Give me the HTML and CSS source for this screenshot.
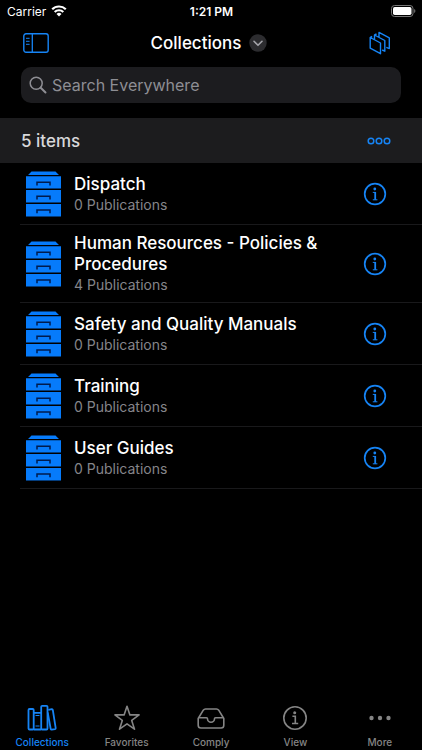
FILE: index.html
```html
<!DOCTYPE html>
<html lang="en">
<head>
<meta charset="utf-8">
<meta name="viewport" content="width=device-width, initial-scale=1">
<title>Collections</title>
<link rel="stylesheet" href="styles.css">
</head>
<body>
<svg class="defs" aria-hidden="true">
  <symbol id="cabinet" viewBox="0 0 35 46">
    <path fill="currentColor" d="M5.500 0.500h24l3.500 3.500H2zM0 5.200h35v12.300H0zM0 19h35v12.400H0zM0 33h35v12.500H0z"/>
    <path fill="none" stroke="#001b4d" stroke-width="1.500" d="M11 14.500v-3.200h13v3.200M11 28.500v-3.200h13v3.200M11 42.300v-3.200h13v3.200"/>
  </symbol>
  <symbol id="info" viewBox="0 0 24 24">
    <circle cx="12" cy="12" r="10.300" fill="none" stroke="currentColor" stroke-width="1.700"/>
    <circle cx="11.800" cy="7" r="1.400" fill="currentColor"/>
    <path fill="none" stroke="currentColor" stroke-width="1.800" d="M12.200 10v7.800"/>
    <path fill="none" stroke="currentColor" stroke-width="1" d="M9.800 10.400h3M9.800 17.800h4.600"/>
  </symbol>
</svg>
<div class="app">
  <div class="status">
    <div class="carrier"><span>Carrier</span>
      <svg width="16" height="12" viewBox="0 0 16 12"><path fill="none" stroke="#fff" stroke-width="2.200" d="M1.200 4.300a9.700 9.700 0 0 1 13.600 0M3.700 7a6.200 6.200 0 0 1 8.600 0"/><path fill="#fff" d="M8 11.400 5.500 8.900a3.600 3.600 0 0 1 5 0z"/></svg>
    </div>
    <div class="time">1:21 PM</div>
    <div class="battery">
      <svg width="25" height="12" viewBox="0 0 25 12"><rect x=".5" y=".5" width="21.500" height="11" rx="3" fill="none" stroke="#777"/><rect x="2" y="2" width="18.500" height="8" rx="1.700" fill="#fff"/><path fill="#777" d="M23.200 4v4c1.600-.6 1.600-3.400 0-4z"/></svg>
    </div>
  </div>
  <header class="nav">
    <button class="icon-button" aria-label="Toggle sidebar">
      <svg width="26" height="20" viewBox="0 0 26 20" fill="none" stroke="currentColor"><rect x=".8" y=".8" width="24.400" height="18.400" rx="2.200" stroke-width="1.400"/><path stroke-width="1.300" d="M9.300 1v18"/><path stroke-width="1" d="M3 5.300h3.600M3 8.300h3.600M3 11.300h3.600"/></svg>
    </button>
    <button class="title"><span>Collections</span>
      <svg width="18" height="18" viewBox="0 0 18 18"><circle cx="9" cy="9" r="8.700" fill="#2c2c2f"/><path d="m5 7.300 4 4 4-4" fill="none" stroke="#a4a4aa" stroke-width="1.600" stroke-linecap="round" stroke-linejoin="round"/></svg>
    </button>
    <button class="icon-button" aria-label="Publications">
      <svg width="22" height="24" viewBox="0 0 22 24" fill="none" stroke="currentColor" stroke-width="1.400" stroke-linejoin="round"><path d="M1.200 6.500 11.500 12v10.700L1.200 17.200zM1.200 6.500l2-1M5.500 8.200V4l10.300 5.500v10.700l-2.600-1.200M5.500 4l2-1M10 6V1.400l10.300 5.500v10.700l-3-1.200"/></svg>
    </button>
  </header>
  <div class="search">
    <svg width="18" height="18" viewBox="0 0 18 18" fill="none" stroke="#8e8e94" stroke-width="1.500" stroke-linecap="round"><circle cx="7.200" cy="7.200" r="6"/><path stroke-width="2" d="m11.700 11.700 4.800 4.800"/></svg>
    <input type="search" placeholder="Search Everywhere" aria-label="Search Everywhere">
  </div>
  <div class="summary">
    <h2>5 items</h2>
    <button class="icon-button" aria-label="Options">
      <svg width="24" height="8" viewBox="0 0 24 8" fill="none" stroke="currentColor" stroke-width="1.500"><circle cx="4" cy="4" r="2.800"/><circle cx="12" cy="4" r="2.800"/><circle cx="20" cy="4" r="2.800"/></svg>
    </button>
  </div>
  <ul class="list">
    <li class="row"><svg class="cabinet"><use href="#cabinet"/></svg><div class="body"><div class="text"><h3>Dispatch</h3><p>0 Publications</p></div><button class="icon-button" aria-label="About Dispatch"><svg class="info"><use href="#info"/></svg></button></div></li>
    <li class="row"><svg class="cabinet"><use href="#cabinet"/></svg><div class="body"><div class="text"><h3>Human Resources - Policies &amp; Procedures</h3><p>4 Publications</p></div><button class="icon-button" aria-label="About Human Resources"><svg class="info"><use href="#info"/></svg></button></div></li>
    <li class="row"><svg class="cabinet"><use href="#cabinet"/></svg><div class="body"><div class="text"><h3>Safety and Quality Manuals</h3><p>0 Publications</p></div><button class="icon-button" aria-label="About Safety and Quality Manuals"><svg class="info"><use href="#info"/></svg></button></div></li>
    <li class="row"><svg class="cabinet"><use href="#cabinet"/></svg><div class="body"><div class="text"><h3>Training</h3><p>0 Publications</p></div><button class="icon-button" aria-label="About Training"><svg class="info"><use href="#info"/></svg></button></div></li>
    <li class="row"><svg class="cabinet"><use href="#cabinet"/></svg><div class="body"><div class="text"><h3>User Guides</h3><p>0 Publications</p></div><button class="icon-button" aria-label="About User Guides"><svg class="info"><use href="#info"/></svg></button></div></li>
  </ul>
  <nav class="tabs">
    <a class="tab active" href="#collections">
      <svg width="30" height="28" viewBox="0 0 30 28" fill="none" stroke="currentColor" stroke-width="1.800" stroke-linejoin="round"><rect x="1.500" y="5" width="5.200" height="20.500" rx="1"/><path d="M6.700 8.800h7.500M6.700 25.500h7.500"/><path stroke-width="1.200" d="M8.500 11.500h4M8.500 22h4"/><rect x="14.200" y="1.800" width="6.300" height="23.700" rx="1"/><path d="m21.300 5.800 3.500-.7q.8-.1 1 .8l2.900 18.300q.1.800-.7 1l-3.300.5q-.8.100-1-.7L20.700 8.500"/></svg>
      <span>Collections</span></a>
    <a class="tab" href="#favorites">
      <svg width="28" height="28" viewBox="0 0 28 28" fill="none" stroke="currentColor" stroke-width="1.600" stroke-linejoin="round"><path d="m14 2.200 2.900 8.700h9.200l-7.400 5.500 2.800 8.800-7.500-5.400-7.500 5.400 2.800-8.800-7.400-5.500h9.200z"/></svg>
      <span>Favorites</span></a>
    <a class="tab" href="#comply">
      <svg width="28" height="28" viewBox="0 0 28 28" fill="none" stroke="currentColor" stroke-width="1.600" stroke-linejoin="round"><path d="M1.200 14.500v6.800q0 2.700 2.700 2.700h20.200q2.700 0 2.700-2.700v-6.800L21.700 6.200Q20.900 5 19.500 5h-11Q7.100 5 6.300 6.200zM1.200 13.700h8.300q1 0 1 1a3.500 3.500 0 0 0 7 0q0-1 1-1h8.300"/></svg>
      <span>Comply</span></a>
    <a class="tab" href="#view">
      <svg width="28" height="28" viewBox="0 0 28 28" fill="none" stroke="currentColor" stroke-width="1.600"><circle cx="14" cy="14" r="11.200"/><circle cx="13.700" cy="8.800" r="1.500" fill="currentColor" stroke="none"/><path d="M11.400 12.300h2.900v7.200M11 19.500h6.200"/></svg>
      <span>View</span></a>
    <a class="tab" href="#more">
      <svg width="28" height="28" viewBox="0 0 28 28" fill="currentColor"><circle cx="5.500" cy="14" r="2.200"/><circle cx="14" cy="14" r="2.200"/><circle cx="22.500" cy="14" r="2.200"/></svg>
      <span>More</span></a>
  </nav>
</div>
</body>
</html>
```
FILE: styles.css
```css
* { box-sizing: border-box; }
body {
  margin: 0;
  background: #000;
  color: #fff;
  font-family: Inter, "Liberation Sans", sans-serif;
}
h2, h3, p, ul { margin: 0; padding: 0; }
button {
  border: 0;
  padding: 0;
  background: none;
  color: inherit;
  font: inherit;
}
svg { display: block; flex: none; }
.defs { display: none; }
.app {
  display: flex;
  flex-direction: column;
  min-height: 100vh;
}
.status {
  display: grid;
  grid-template-columns: 1fr auto 1fr;
  align-items: center;
  height: 22px;
  padding: 0 6px 0 7px;
  font-size: 12px;
}
.carrier { display: flex; align-items: center; gap: 5px; }
.time { font-weight: 600; }
.battery { justify-self: end; }
.nav {
  display: flex;
  align-items: center;
  justify-content: space-between;
  height: 42px;
  padding: 0 31px 0 23px;
}
.icon-button { color: #1684f5; }
.title {
  display: flex;
  align-items: center;
  gap: 8px;
  font-size: 17px;
  font-weight: 500;
}
.search {
  display: flex;
  align-items: center;
  gap: 5px;
  height: 36px;
  margin: 3px 21px 15px;
  padding: 0 8px;
  border-radius: 10px;
  background: #1c1c1f;
}
.search input {
  flex: 1;
  min-width: 0;
  padding: 0;
  border: 0;
  outline: 0;
  background: none;
  color: #fff;
  font: 16px Inter, sans-serif;
}
.search input::placeholder { color: #8e8e94; opacity: 1; }
.summary {
  display: flex;
  align-items: center;
  justify-content: space-between;
  height: 45px;
  padding: 0 31px 0 21px;
  background: #1c1c1e;
}
.summary h2 { color: #d8d8da; font-size: 17px; font-weight: 500; }
.list { list-style: none; }
.row {
  display: flex;
  padding-left: 26px;
  border-bottom: 1px solid;
  border-image: linear-gradient(to right, #000 21px, #19191b 21px) 1;
}
.cabinet {
  width: 35px;
  height: 46px;
  align-self: center;
  color: #067bfb;
}
.body {
  flex: 1;
  display: flex;
  align-items: center;
  justify-content: space-between;
  gap: 24px;
  min-height: 61px;
  padding: 8px 35px 8px 13px;
}
.text h3 { font-size: 17px; line-height: 21px; font-weight: 500; }
.text p { color: #85858a; font-size: 14px; line-height: 19px; }
.info { width: 24px; height: 24px; }
.tabs {
  display: flex;
  margin-top: auto;
}
.tab {
  flex: 1;
  display: flex;
  flex-direction: column;
  align-items: center;
  gap: 3px;
  color: #858585;
  font-size: 10px;
  line-height: 14px;
  font-weight: 500;
  text-decoration: none;
  padding-bottom: 1px;
}
.tab.active { color: #1684f5; }
```
